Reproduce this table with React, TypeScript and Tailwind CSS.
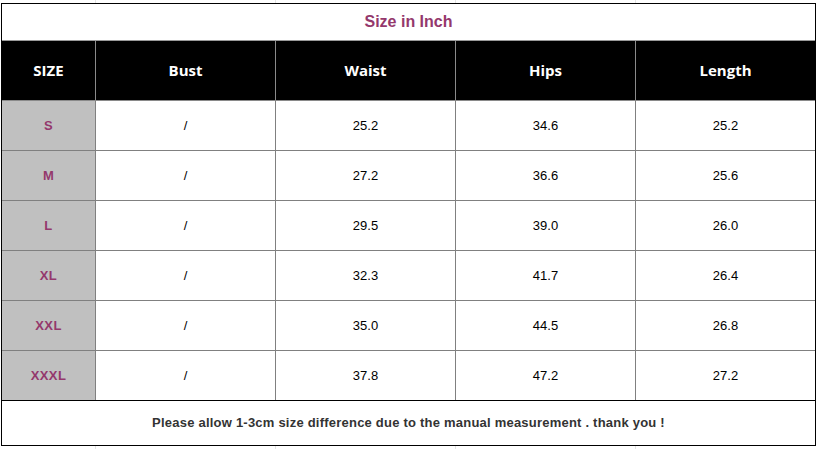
import React from 'react';

interface SizeRow {
  size: string;
  bust: string;
  waist: string;
  hips: string;
  length: string;
}

const rows: SizeRow[] = [
  { size: 'S', bust: '/', waist: '25.2', hips: '34.6', length: '25.2' },
  { size: 'M', bust: '/', waist: '27.2', hips: '36.6', length: '25.6' },
  { size: 'L', bust: '/', waist: '29.5', hips: '39.0', length: '26.0' },
  { size: 'XL', bust: '/', waist: '32.3', hips: '41.7', length: '26.4' },
  { size: 'XXL', bust: '/', waist: '35.0', hips: '44.5', length: '26.8' },
  { size: 'XXXL', bust: '/', waist: '37.8', hips: '47.2', length: '27.2' },
];

const headers = ['SIZE', 'Bust', 'Waist', 'Hips', 'Length'];

const cols = 'grid grid-cols-[94px_180px_180px_180px_179px]';

// тонкие линии сетки над и под таблицей
const GhostGrid: React.FC<{ h: string }> = ({ h }) => (
  <div className={`${cols} ml-[2px] ${h}`}>
    {[0, 1, 2, 3, 4].map(i => (
      <div key={i} className={i < 4 ? 'border-r border-[#e4e4e4]' : ''} />
    ))}
  </div>
);

const App: React.FC = () => {
  return (
    <div className="w-[817px] h-[449px] bg-white overflow-hidden font-['Liberation_Sans',Arial,sans-serif]">
      <GhostGrid h="h-[3px]" />

      <div className="ml-[1px] w-[815px] border border-black">
        {/* Заголовок */}
        <div className="h-[37px] border-b border-[#9a9a9a] flex items-center justify-center">
          <span className="text-[16px] font-bold text-[#94386c]">Size in Inch</span>
        </div>

        {/* Шапка */}
        <div className={`${cols} h-[60px] bg-black border-b border-[#8a8a8a]`}>
          {headers.map((h, i) => (
            <div
              key={h}
              className={`flex items-center justify-center text-white font-bold text-[15px] font-['Open_Sans','Noto_Sans',sans-serif] ${
                i < 4 ? 'border-r border-[#8a8a8a]' : ''
              }`}
            >
              {h}
            </div>
          ))}
        </div>

        {/* Строки */}
        {rows.map((r, idx) => (
          <div
            key={r.size}
            className={`${cols} h-[50px] border-b ${
              idx === rows.length - 1 ? 'border-black' : 'border-[#808080]'
            }`}
          >
            <div className="bg-[#c0c0c0] border-r border-[#808080] flex items-center justify-center text-[13px] font-bold tracking-[0.4px] text-[#94386c]">
              {r.size}
            </div>
            {[r.bust, r.waist, r.hips, r.length].map((v, i) => (
              <div
                key={i}
                className={`flex items-center justify-center text-[13px] text-black ${
                  i < 3 ? 'border-r border-[#808080]' : ''
                }`}
              >
                {v}
              </div>
            ))}
          </div>
        ))}

        {/* Примечание */}
        <div className="h-[44px] flex items-center justify-center">
          <span className="text-[13px] font-bold tracking-[0.22px] text-[#333333]">
            Please allow 1-3cm size difference due to the manual measurement . thank you !
          </span>
        </div>
      </div>

      <GhostGrid h="h-[3px]" />
    </div>
  );
};

export default App;
